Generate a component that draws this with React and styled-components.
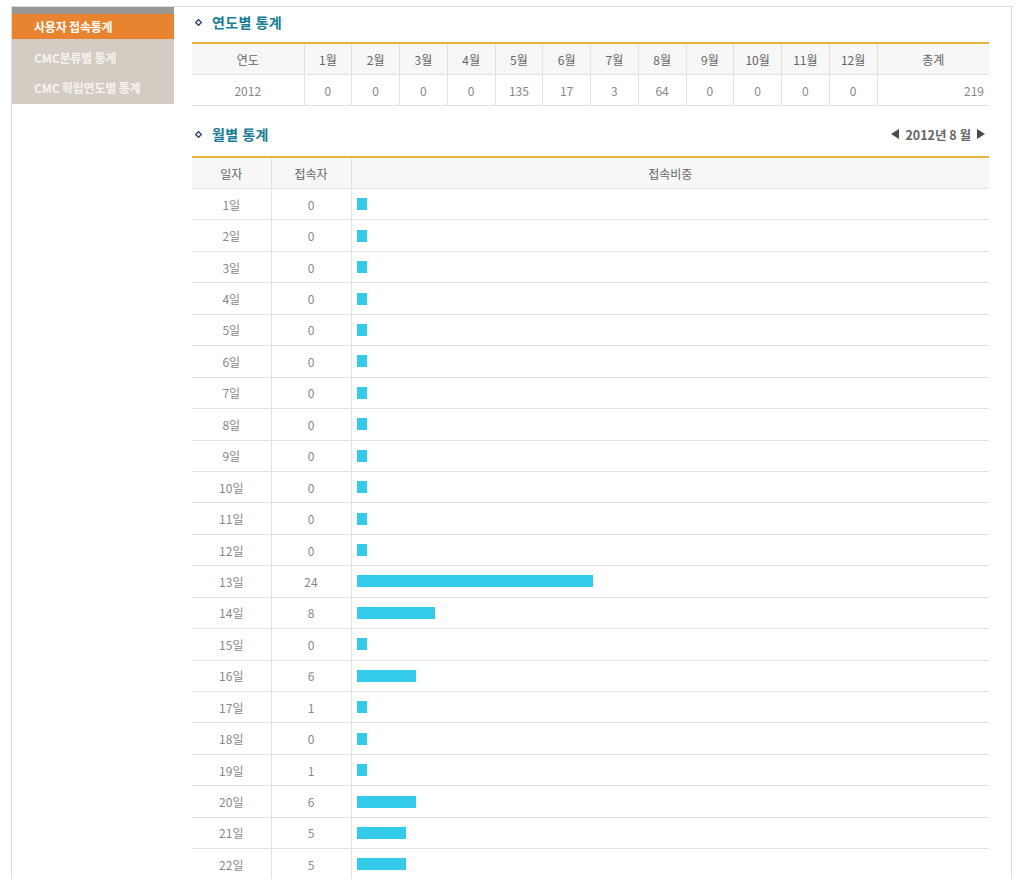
import React from "react";
import styled, { createGlobalStyle } from "styled-components";

const GlobalStyle = createGlobalStyle`
  body {
    margin: 0;
    background: #fff;
    font-family: "Noto Sans CJK KR", "Noto Sans", sans-serif;
  }
`;

const months = [0, 0, 0, 0, 135, 17, 3, 64, 0, 0, 0, 0];
const days = [
  0, 0, 0, 0, 0, 0, 0, 0, 0, 0, 0, 0, 24, 8, 0, 6, 1, 0, 1, 6, 5, 5, 3, 2, 0,
  0, 3, 0, 0, 0, 0,
];
const monthTotal = days.reduce((a, b) => a + b, 0);

const menu = ["사용자 접속통계", "CMC분류별 통계", "CMC 확립연도별 통계"];

const Page = styled.div`
  padding: 6px 10px 0 11px;
`;

const Frame = styled.div`
  display: flex;
  border: 1px solid #dcdcdc;
  border-bottom: none;
  min-height: 1200px;
`;

const Sidebar = styled.div`
  width: 162px;
  flex-shrink: 0;
  align-self: flex-start;
  background: #d3ccc2;
  border-top: 7px solid #9a9893;
  padding-bottom: 2px;
`;

const MenuItem = styled.div`
  height: ${(p) => (p.$active ? "25px" : "30px")};
  margin-bottom: ${(p) => (p.$active ? "3px" : "0")};
  display: flex;
  align-items: center;
  padding-left: 22px;
  font-size: 12px;
  font-weight: 700;
  letter-spacing: -0.2px;
  color: ${(p) => (p.$active ? "#fff" : "#f6f3ef")};
  background: ${(p) => (p.$active ? "#e8832f" : "transparent")};
`;

const Main = styled.div`
  flex: 1;
  padding: 0 22px 0 18px;
`;

const Heading = styled.div`
  display: flex;
  align-items: center;
  justify-content: space-between;
  height: 30px;
  margin: ${(p) => (p.$first ? "0 0 5px" : "13px 0 7px")};
`;

const Title = styled.h2`
  display: flex;
  align-items: center;
  gap: 10px;
  margin: 0;
  padding-left: 3px;
  font-size: 14px;
  font-weight: 700;
  color: #177d96;
  letter-spacing: 0.4px;
`;

const MonthNav = styled.div`
  display: flex;
  align-items: center;
  gap: 6px;
  padding-right: 4px;
  font-size: 12.5px;
  font-weight: 700;
  color: #666;
`;

const Table = styled.table`
  width: 100%;
  border-collapse: collapse;
  table-layout: fixed;
  border-top: 2px solid #e9b53c;
  font-size: 12px;
`;

const Th = styled.th`
  height: 30px;
  padding: 0;
  background: #f7f7f7;
  color: #666;
  font-weight: 400;
  border-left: 1px solid #e2e2e2;
  border-bottom: 1px solid #e2e2e2;
  &:first-child {
    border-left: none;
  }
`;

const Td = styled.td`
  height: ${(p) => p.$h || "30px"};
  padding: 0 ${(p) => (p.$right ? "5px" : "0")} 0 0;
  text-align: ${(p) => (p.$right ? "right" : "center")};
  color: #888;
  border-left: 1px solid #e2e2e2;
  border-bottom: 1px solid #e2e2e2;
  &:first-child {
    border-left: none;
  }
`;

const BarCell = styled.td`
  padding: 0 5px;
  border-left: 1px solid #e2e2e2;
  border-bottom: 1px solid #e2e2e2;
`;

const Bar = styled.div`
  height: 12px;
  min-width: 10px;
  background: #33cbe9;
`;

const Diamond = () => (
  <svg width="7" height="7" viewBox="0 0 7 7">
    <path d="M3.5 0.5 L6.5 3.5 L3.5 6.5 L0.5 3.5 Z" fill="#dfe6ee" stroke="#2a3b63" strokeWidth="1.2" />
  </svg>
);

const Arrow = ({ dir }) => (
  <svg width="8" height="10" viewBox="0 0 8 10">
    {dir === "left" ? (
      <path d="M8 0 L8 10 L0 5 Z" fill="#4a4a4a" />
    ) : (
      <path d="M0 0 L0 10 L8 5 Z" fill="#4a4a4a" />
    )}
  </svg>
);

export default function App() {
  const yearTotal = months.reduce((a, b) => a + b, 0);
  return (
    <Page>
      <GlobalStyle />
      <Frame>
        <Sidebar>
          {menu.map((m, i) => (
            <MenuItem key={m} $active={i === 0}>
              {m}
            </MenuItem>
          ))}
        </Sidebar>
        <Main>
          <Heading $first>
            <Title>
              <Diamond />
              연도별 통계
            </Title>
          </Heading>
          <Table>
            <colgroup>
              <col style={{ width: 112 }} />
              {months.map((_, i) => (
                <col key={i} />
              ))}
              <col style={{ width: 112 }} />
            </colgroup>
            <thead>
              <tr>
                <Th>연도</Th>
                {months.map((_, i) => (
                  <Th key={i}>{i + 1}월</Th>
                ))}
                <Th>총계</Th>
              </tr>
            </thead>
            <tbody>
              <tr>
                <Td>2012</Td>
                {months.map((v, i) => (
                  <Td key={i}>{v}</Td>
                ))}
                <Td $right>{yearTotal}</Td>
              </tr>
            </tbody>
          </Table>

          <Heading>
            <Title>
              <Diamond />
              월별 통계
            </Title>
            <MonthNav>
              <Arrow dir="left" />
              <span>2012년 8 월</span>
              <Arrow dir="right" />
            </MonthNav>
          </Heading>
          <Table>
            <colgroup>
              <col style={{ width: 79 }} />
              <col style={{ width: 80 }} />
              <col />
            </colgroup>
            <thead>
              <tr>
                <Th>일자</Th>
                <Th>접속자</Th>
                <Th>접속비중</Th>
              </tr>
            </thead>
            <tbody>
              {days.map((v, i) => (
                <tr key={i}>
                  <Td $h="30.45px">{i + 1}일</Td>
                  <Td $h="30.45px">{v}</Td>
                  <BarCell>
                    <Bar style={{ width: `${(v / monthTotal) * 100.5}%` }} />
                  </BarCell>
                </tr>
              ))}
            </tbody>
          </Table>
        </Main>
      </Frame>
    </Page>
  );
}
